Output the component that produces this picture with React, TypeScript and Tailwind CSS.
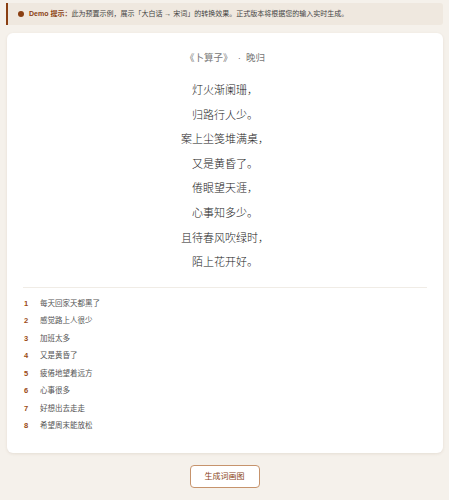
const POEM_LINES = [
  '灯火渐阑珊，',
  '归路行人少。',
  '案上尘笺堆满桌，',
  '又是黄昏了。',
  '倦眼望天涯，',
  '心事知多少。',
  '且待春风吹绿时，',
  '陌上花开好。',
];

const PLAIN_LINES = [
  '每天回家天都黑了',
  '感觉路上人很少',
  '加班太多',
  '又是黄昏了',
  '疲倦地望着远方',
  '心事很多',
  '好想出去走走',
  '希望周末能放松',
];

export default function App() {
  return (
    <div
      className="min-h-[500px] bg-[#f5f1eb] px-[6px] pt-[3px] text-[#333]"
      style={{ fontFamily: '"Liberation Sans", "Noto Sans CJK SC", sans-serif' }}
    >
      <div className="flex h-[22px] items-center rounded-r-[3px] border-l-2 border-[#8a3f12] bg-[#efe8df] pl-[10px] text-[7px]">
        <span className="mr-[5px] h-[6px] w-[6px] rounded-full bg-[#8a3f12]" />
        <span className="font-bold text-[#8a3f12]">Demo 提示：</span>
        <span className="text-[#444]">此为预置示例，展示「大白话 → 宋词」的转换效果。正式版本将根据您的输入实时生成。</span>
      </div>

      <div className="ml-px mt-[8px] flex h-[420px] flex-col rounded-[6px] bg-white px-[16px] pb-[18px] pt-[17px] shadow-[0_1px_3px_rgba(120,90,60,0.12)]">
        <div className="text-center text-[9.5px] leading-[16px] text-[#777]">
          《卜算子》&nbsp;&nbsp;·&nbsp;&nbsp;晚归
        </div>
        <div
          className="mt-[12px] flex flex-col items-center text-[11px] font-light leading-[24.6px] text-[#222]"
          style={{ fontFamily: '"Liberation Serif", "Noto Sans CJK SC", serif' }}
        >
          {POEM_LINES.map((line) => (
            <div key={line}>{line}</div>
          ))}
        </div>
        <div className="mt-[12px] h-px bg-[#f0ece6]" />
        <ol className="pt-[7px]">
          {PLAIN_LINES.map((line, i) => (
            <li key={line} className="flex h-[17.5px] items-center text-[7.5px]">
              <span className="w-[17px] pl-[1px] font-bold text-[#9a4a14]">{i + 1}</span>
              <span className="text-[#555]">{line}</span>
            </li>
          ))}
        </ol>
      </div>

      <div className="flex justify-center pt-[12px]">
        <button className="h-[23px] w-[70px] rounded-[4px] border border-[#c6936c] bg-white text-[8px] text-[#8a4518]">
          生成词画图
        </button>
      </div>
    </div>
  );
}
